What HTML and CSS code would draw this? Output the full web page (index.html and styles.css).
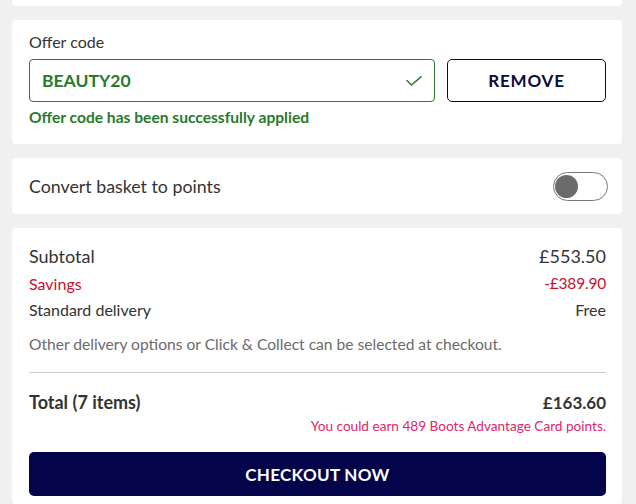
FILE: index.html
```html
<!DOCTYPE html>
<html lang="en">
<head>
<meta charset="utf-8">
<title>Basket summary</title>
<link rel="stylesheet" href="styles.css">
</head>
<body>
<div class="page">
  <div class="card card-stub"></div>

  <section class="card offer">
    <label class="offer-label" for="code">Offer code</label>
    <div class="offer-row">
      <div class="offer-input">
        <span class="offer-code" id="code">BEAUTY20</span>
        <svg class="check" width="16" height="10" viewBox="0 0 16 10" aria-hidden="true">
          <path d="M1 4.5 L5.5 9 L15 0.8" fill="none" stroke="#2e7d32" stroke-width="1.6" stroke-linecap="round" stroke-linejoin="round"/>
        </svg>
      </div>
      <button class="btn-remove">REMOVE</button>
    </div>
    <p class="offer-success">Offer code has been successfully applied</p>
  </section>

  <section class="card convert">
    <span class="convert-label">Convert basket to points</span>
    <span class="toggle"><span class="knob"></span></span>
  </section>

  <section class="card summary">
    <div class="row row-subtotal"><span>Subtotal</span><span>£553.50</span></div>
    <div class="row row-savings"><span>Savings</span><span class="amount-savings">-£389.90</span></div>
    <div class="row row-delivery"><span>Standard delivery</span><span>Free</span></div>
    <p class="delivery-note">Other delivery options or Click &amp; Collect can be selected at checkout.</p>
    <hr class="divider">
    <div class="row row-total"><span class="total-label">Total (7 items)</span><span>£163.60</span></div>
    <p class="points">You could earn 489 Boots Advantage Card points.</p>
    <button class="btn-checkout">CHECKOUT NOW</button>
  </section>
</div>
</body>
</html>
```
FILE: styles.css
```css
* { box-sizing: border-box; }

html, body {
  margin: 0;
  padding: 0;
  background: #f0f0f0;
}

body {
  font-family: Lato, "Open Sans", "Liberation Sans", sans-serif;
  color: #333333;
}

.page {
  display: flex;
  flex-direction: column;
  gap: 14px;
  padding: 0 14px 0 12px;
}

.card {
  background: #ffffff;
  border-radius: 4px;
}

.card-stub {
  height: 6px;
  border-radius: 0 0 4px 4px;
}

.offer {
  padding: 11px 16px 17px 17px;
  display: flex;
  flex-direction: column;
}

.offer-label {
  font-size: 16px;
  line-height: 22px;
  color: #333;
}

.offer-row {
  display: flex;
  gap: 12px;
  margin-top: 6px;
}

.offer-input {
  flex: 1;
  height: 43px;
  border: 1px solid #2e7d32;
  border-radius: 4px;
  display: flex;
  align-items: center;
  justify-content: space-between;
  padding: 0 12px 0 12px;
}

.offer-code {
  font-size: 17.5px;
  font-weight: 700;
  color: #2a7a2c;
}

.check { display: block; }

.btn-remove {
  width: 159px;
  height: 43px;
  background: #fff;
  border: 1px solid #0b0b3b;
  border-radius: 5px;
  font-family: inherit;
  font-size: 17px;
  font-weight: 700;
  letter-spacing: 0.8px;
  color: #0b0b3b;
  padding: 0;
}

.offer-success {
  margin: 5px 0 0;
  font-size: 15.6px;
  line-height: 20px;
  font-weight: 700;
  color: #2a7a2c;
}

.convert {
  height: 56px;
  display: flex;
  align-items: center;
  justify-content: space-between;
  padding: 0 14px 0 17px;
}

.convert-label {
  font-size: 17.8px;
  color: #333;
  margin-top: -1px;
}

.toggle {
  width: 55px;
  height: 29px;
  border: 1px solid #777;
  border-radius: 15px;
  display: flex;
  align-items: center;
  padding-left: 1px;
}

.knob {
  width: 23px;
  height: 23px;
  border-radius: 50%;
  background: #6b6b6b;
}

.summary {
  padding: 14px 16px 8px 17px;
  display: flex;
  flex-direction: column;
}

.row {
  display: flex;
  justify-content: space-between;
  align-items: center;
}

.row-subtotal {
  font-size: 18px;
  height: 28px;
}

.row-savings {
  font-size: 16px;
  height: 26px;
  color: #c8102e;
}

.amount-savings {
  font-size: 15.5px;
  letter-spacing: -0.2px;
}

.row-delivery {
  font-size: 16px;
  height: 26px;
}

.delivery-note {
  margin: 12px 0 0;
  font-size: 15.6px;
  line-height: 20px;
  color: #6b6b6b;
}

.divider {
  margin: 18px 0 0;
  border: 0;
  border-top: 1px solid #cccccc;
}

.row-total {
  margin-top: 16px;
  height: 26px;
  font-size: 17px;
  font-weight: 700;
}

.total-label {
  font-size: 18px;
}

.points {
  margin: 0;
  text-align: right;
  font-size: 13.6px;
  line-height: 22px;
  color: #e0256b;
}

.btn-checkout {
  margin-top: 15px;
  height: 44px;
  width: 100%;
  border: 0;
  border-radius: 5px;
  background: #04044a;
  color: #ffffff;
  font-family: inherit;
  font-size: 17px;
  font-weight: 700;
  letter-spacing: 0.3px;
}
```
